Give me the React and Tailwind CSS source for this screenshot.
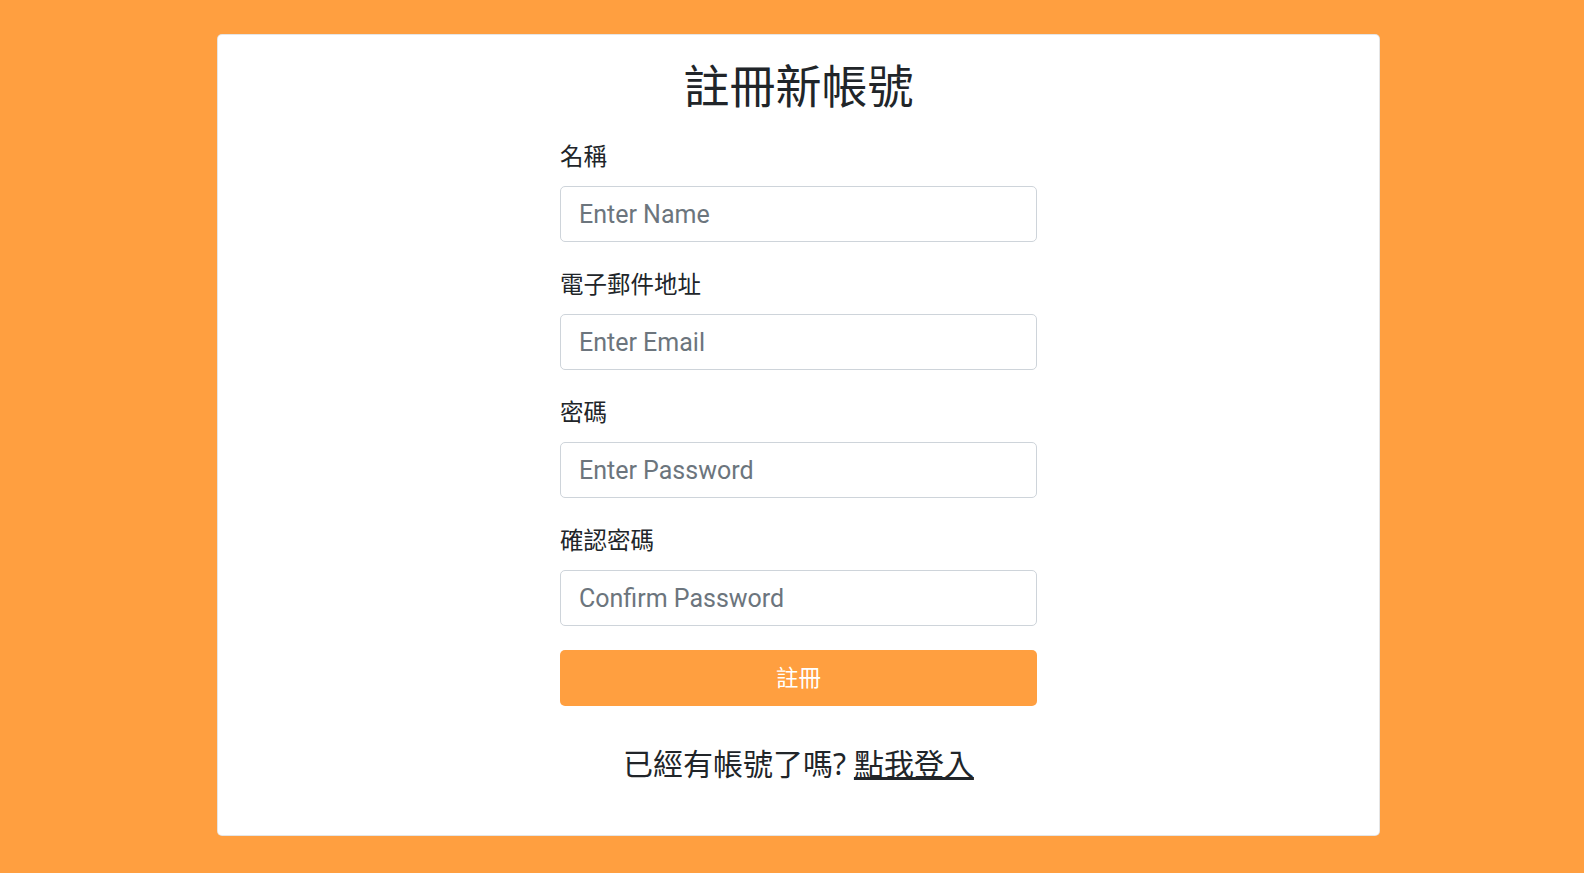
import React, { useState } from 'react';

const fontStack = { fontFamily: '"Noto Sans", "Noto Sans CJK TC", sans-serif' };

const Field = ({ id, label, type, placeholder, value, onChange }) => (
  <div className="flex flex-col">
    <label htmlFor={id} className="text-[23.5px] leading-[33px] text-[#212529] mb-[13px]">
      {label}
    </label>
    <input
      id={id}
      type={type}
      placeholder={placeholder}
      value={value}
      onChange={(e) => onChange(e.target.value)}
      className="h-[56px] w-full rounded-[5px] border border-[#ced4da] bg-white px-[18px] font-['Roboto','Noto_Sans',sans-serif] text-[25px] text-[#495057] placeholder:text-[#6c757d] focus:outline-none"
    />
  </div>
);

const App = () => {
  const [name, setName] = useState('');
  const [email, setEmail] = useState('');
  const [password, setPassword] = useState('');
  const [confirm, setConfirm] = useState('');

  return (
    <div className="min-h-[873px] bg-[#ff9f40] pt-[34px] pb-[38px]" style={fontStack}>
      <div className="ml-[217px] w-[1163px] rounded-[5px] border border-black/10 bg-white pt-[23px] pb-[49px]">
        <h2 className="text-center text-[46px] leading-[54px] font-normal text-[#212529]">註冊新帳號</h2>
        <form className="mx-auto mt-[28px] flex w-[477px] flex-col" onSubmit={(e) => e.preventDefault()}>
          <div className="flex flex-col gap-[26px]">
            <Field id="name" label="名稱" type="text" placeholder="Enter Name" value={name} onChange={setName} />
            <Field id="email" label="電子郵件地址" type="email" placeholder="Enter Email" value={email} onChange={setEmail} />
            <Field id="password" label="密碼" type="password" placeholder="Enter Password" value={password} onChange={setPassword} />
            <Field id="confirm" label="確認密碼" type="password" placeholder="Confirm Password" value={confirm} onChange={setConfirm} />
          </div>
          <button
            type="submit"
            className="mt-[24px] h-[56px] w-full rounded-[5px] bg-[#ff9f40] text-[22.5px] text-white"
          >
            註冊
          </button>
        </form>
        <p className="mt-[35px] text-center text-[30px] leading-[45px] text-[#212529]">
          已經有帳號了嗎? <a href="#" className="underline text-[#212529]">點我登入</a>
        </p>
      </div>
    </div>
  );
};

export default App;
